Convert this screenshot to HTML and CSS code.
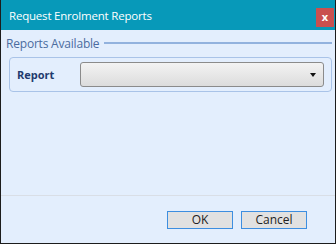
FILE: index.html
```html
<!DOCTYPE html>
<html lang="en">
<head>
  <meta charset="UTF-8">
  <meta name="viewport" content="width=device-width, initial-scale=1.0">
  <title>Request Enrolment Reports</title>
  <link rel="stylesheet" href="styles.css">
</head>
<body>
  <div class="window">
    <div class="titlebar">
      <span class="title">Request Enrolment Reports</span>
      <span class="close">x</span>
    </div>
    <div class="content">
      <div class="legend">
        <span>Reports Available</span>
        <div class="rule"></div>
      </div>
      <div class="group">
        <span class="label">Report</span>
        <div class="select">
          <span class="arrow"></span>
        </div>
      </div>
    </div>
    <div class="footer">
      <button class="btn">OK</button>
      <button class="btn">Cancel</button>
    </div>
  </div>
</body>
</html>
```

FILE: styles.css
```css
body { margin: 0; padding: 0; font-family: "Open Sans", "Noto Sans", sans-serif; }
.window { width: 336px; height: 244px; box-sizing: border-box; border: 1px solid #1c1c1c; border-top: none; background: #e3eefd; display: flex; flex-direction: column; }
.titlebar { height: 30px; background: #0799b9; display: flex; align-items: flex-start; }
.title { color: #fff; font-size: 11.5px; margin: 8px 0 0 8px; letter-spacing: -0.2px; }
.close { margin: 8px 1px 0 auto; width: 18px; height: 19px; background: #c9504f; color: #fff; font-size: 11px; font-weight: bold; text-align: center; line-height: 17px; }
.content { flex: 1; padding: 6px 3px 0 5px; }
.legend { display: flex; align-items: center; color: #4b6c9f; font-size: 12px; height: 14px; letter-spacing: -0.2px; }
.rule { flex: 1; height: 2px; background: #92b2de; margin-left: 5px; }
.group { margin: 7px 0 0 3px; height: 33px; border: 1px solid #a9c3e8; border-radius: 4px; display: flex; align-items: center; }
.label { width: 70px; padding-left: 7px; box-sizing: border-box; font-size: 11px; font-weight: bold; color: #1f3a6e; }
.select { width: 244px; height: 25px; box-sizing: border-box; border: 1px solid #8b8b8b; border-radius: 3px; background: linear-gradient(#f3f3f3, #dcdcdc); display: flex; align-items: center; justify-content: flex-end; }
.arrow { width: 0; height: 0; border-left: 3px solid transparent; border-right: 3px solid transparent; border-top: 4px solid #111; margin-right: 7px; }
.footer { height: 48px; border-top: 1px solid #d9dee6; display: flex; justify-content: flex-end; align-items: flex-start; gap: 8px; padding: 15px 28px 0 0; box-sizing: border-box; }
.btn { width: 66px; height: 18px; padding: 0; border: 1px solid #3d8ee0; background: #e1e1e1; font-family: "Open Sans", "Noto Sans", sans-serif; font-size: 12px; color: #222; line-height: 14px; }
```
